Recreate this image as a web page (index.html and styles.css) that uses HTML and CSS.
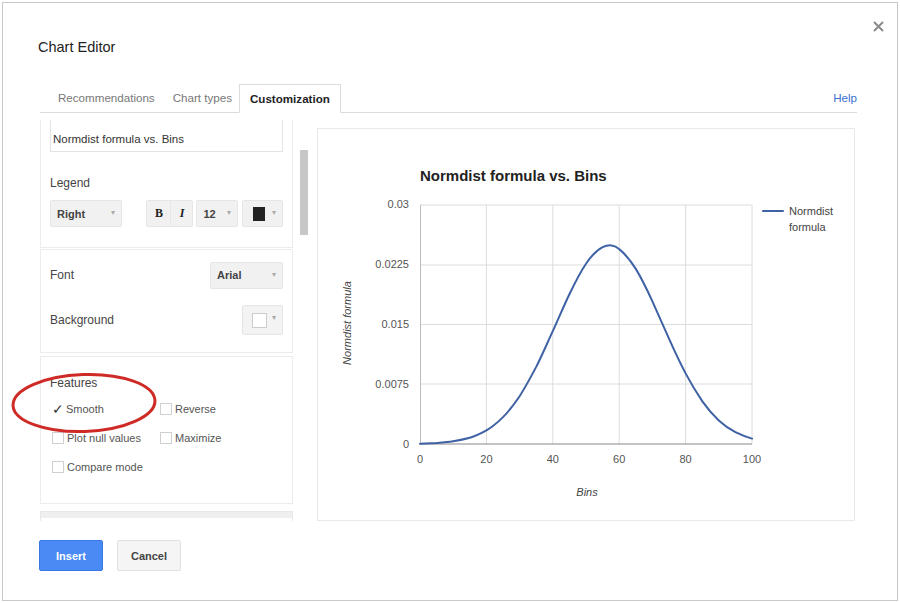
FILE: index.html
```html
<!DOCTYPE html>
<html>
<head>
<meta charset="utf-8">
<link rel="stylesheet" href="styles.css">
</head>
<body>
<div class="dialog">
  <header class="head">
    <h1 class="title">Chart Editor</h1>
    <svg class="close" width="11" height="11" viewBox="0 0 11 11"><path d="M1 1L10 10M10 1L1 10" stroke="#8a8a8a" stroke-width="2"/></svg>
  </header>
  <nav class="tabs">
    <span class="tab">Recommendations</span>
    <span class="tab">Chart types</span>
    <span class="tab active">Customization</span>
    <a class="help">Help</a>
  </nav>
  <div class="main">
    <div class="side">
      <div class="cards">
        <section class="card c1">
          <div class="title-input">Normdist formula vs. Bins</div>
          <div class="label legend-label">Legend</div>
          <div class="controls">
            <div class="dd dd-right">Right<span class="arr">▾</span></div>
            <div class="btn-group">
              <span class="fmt b">B</span><span class="fmt i">I</span>
            </div>
            <div class="dd dd-size">12<span class="arr">▾</span></div>
            <div class="dd dd-color"><span class="sw-black"></span><span class="arr">▾</span></div>
          </div>
        </section>
        <section class="card c2">
          <div class="row">
            <span class="label">Font</span>
            <div class="dd dd-font">Arial<span class="arr">▾</span></div>
          </div>
          <div class="row row-bg">
            <span class="label">Background</span>
            <div class="dd dd-bg"><span class="sw-white"></span><span class="arr">▾</span></div>
          </div>
        </section>
        <section class="card c3">
          <div class="label">Features</div>
          <div class="checks">
            <label class="chk"><span class="box checked">✓</span>Smooth</label>
            <label class="chk"><span class="box"></span>Reverse</label>
            <label class="chk"><span class="box"></span>Plot null values</label>
            <label class="chk"><span class="box"></span>Maximize</label>
            <label class="chk"><span class="box"></span>Compare mode</label>
          </div>
        </section>
        <section class="card c4"></section>
      </div>
      <div class="scrollbar"><div class="thumb"></div></div>
    </div>
    <div class="chart">
      <svg width="536" height="391" viewBox="318 129 536 391" class="chart-svg">
        <text x="420" y="181" class="ctitle">Normdist formula vs. Bins</text>
        <g class="grid">
          <line x1="420" y1="205" x2="752" y2="205"/>
          <line x1="420" y1="265" x2="752" y2="265"/>
          <line x1="420" y1="324.5" x2="752" y2="324.5"/>
          <line x1="420" y1="384" x2="752" y2="384"/>
          <line x1="486.4" y1="205" x2="486.4" y2="444"/>
          <line x1="552.8" y1="205" x2="552.8" y2="444"/>
          <line x1="619.2" y1="205" x2="619.2" y2="444"/>
          <line x1="685.6" y1="205" x2="685.6" y2="444"/>
          <line x1="752" y1="205" x2="752" y2="444"/>
        </g>
        <line x1="420.5" y1="205" x2="420.5" y2="444" class="axis-l"/>
        <line x1="420" y1="444" x2="752" y2="444" class="axis-b"/>
        <g class="ylab">
          <text x="409" y="208">0.03</text>
          <text x="409" y="268">0.0225</text>
          <text x="409" y="328">0.015</text>
          <text x="409" y="388">0.0075</text>
          <text x="409" y="448">0</text>
        </g>
        <g class="xlab">
          <text x="420" y="463">0</text>
          <text x="486.4" y="463">20</text>
          <text x="552.8" y="463">40</text>
          <text x="619.2" y="463">60</text>
          <text x="685.6" y="463">80</text>
          <text x="752" y="463">100</text>
        </g>
        <text x="587" y="496" class="atitle">Bins</text>
        <text transform="translate(351 323) rotate(-90)" class="atitle">Normdist formula</text>
        <path class="curve" d="M420,443.7 C425.5,443.5 431,443.2 436.6,443.0 C442,442.6 447.7,442.2 453.2,441.3 C459,440.3 464,439.3 469.8,437.7 C475.5,436 481,433.3 486.4,430.3 C492,427.3 497.5,422.5 503,417.1 C508.5,411.7 514,404.4 519.6,396.2 C525.3,387.5 530.7,377.3 536.2,366.9 C542,355.3 547.3,343 552.8,331.2 C558.5,318.7 563.8,305.8 569.4,294.2 C575,282.6 580.5,271.8 586,263.7 C591.5,255.6 597,250 602.6,247.1 C606,245.5 609,245.2 611.5,245.4 C614.5,245.7 617,247 619.2,249.1 C625,253.8 630.5,260.5 635.8,268.9 C641.5,278.2 647,289.5 652.4,301.4 C658,313.8 663.5,326.2 669,338.6 C674.5,351 680,362.6 685.6,373.4 C691,383.6 696.6,392.8 702.2,401.1 C707.7,409 713,415 718.8,420.4 C724.3,425.4 729.7,429.2 735.4,432.2 C741,435 746.5,437 752,438.6"/>
        <line x1="763" y1="211" x2="783" y2="211" class="curve"/>
        <text x="789" y="215" class="leg">Normdist</text>
        <text x="789" y="231" class="leg">formula</text>
      </svg>
    </div>
  </div>
  <footer class="foot">
    <button class="b-insert">Insert</button>
    <button class="b-cancel">Cancel</button>
  </footer>
  <svg class="mark" width="150" height="64" viewBox="0 0 150 64"><ellipse cx="75" cy="32" rx="71" ry="28.5" fill="none" stroke="#cf2b26" stroke-width="3" transform="rotate(-2 75 32)"/></svg>
</div>
</body>
</html>
```

FILE: styles.css
```css
* { box-sizing: border-box; }
html, body { margin: 0; padding: 0; background: #fff; }
body { font-family: "Liberation Sans", Arial, sans-serif; color: #333; }

.dialog {
  position: relative;
  margin: 2px 0 0 2px;
  width: 896px;
  height: 599px;
  border: 1px solid #c9c9c9;
  background: #fff;
  overflow: hidden;
}

.head {
  display: flex;
  justify-content: space-between;
  align-items: flex-start;
  padding: 18px 13px 0 35px;
  height: 81px;
}
.title {
  margin: 17px 0 0;
  font-size: 14.5px;
  line-height: 18px;
  font-weight: normal;
  color: #222;
}
.close { display: block; margin-top: 0; }

.tabs {
  display: flex;
  align-items: flex-end;
  margin: 0 40px 0 37px;
  padding-left: 9px;
  height: 29px;
  border-bottom: 1px solid #dcdcdc;
}
.tab {
  font-size: 11.6px;
  line-height: 28px;
  padding: 0 9px;
  color: #777;
}
.tab.active {
  margin-left: -2px;
  padding: 0 10px;
  font-weight: bold;
  color: #222;
  border: 1px solid #dcdcdc;
  border-bottom-color: #fff;
  margin-bottom: -1px;
  background: #fff;
  line-height: 27px;
}
.help {
  margin-left: auto;
  font-size: 11.6px;
  line-height: 28px;
  color: #3a6fd0;
}

.main {
  display: flex;
  margin: 7px 0 0 37px;
}
.side {
  display: flex;
  width: 270px;
  height: 401px;
}
.cards {
  width: 253px;
  height: 401px;
  overflow: hidden;
}
.card {
  border: 1px solid #ececec;
  padding: 0 9px;
  margin-bottom: 3px;
}
.c1 { border-top: 0; padding-bottom: 20px; margin-bottom: 1px; }
.title-input {
  height: 32px;
  border: 1px solid #e3e3e3;
  border-top: 0;
  padding: 8px 2px 0;
  font-size: 11.5px;
  line-height: 22px;
  color: #333;
}
.label {
  font-size: 12px;
  line-height: 16px;
  color: #444;
}
.legend-label { margin-top: 23px; }
.controls {
  display: flex;
  margin-top: 9px;
  height: 27px;
}
.dd {
  position: relative;
  display: flex;
  align-items: center;
  height: 27px;
  background: #f1f1f1;
  border: 1px solid #e6e6e6;
  border-radius: 2px;
  padding-left: 6px;
  font-size: 11px;
  font-weight: bold;
  color: #444;
}
.arr {
  position: absolute;
  right: 6px;
  top: 7px;
  font-size: 8px;
  color: #aaa;
  font-weight: normal;
}
.dd-right { width: 73px; }
.btn-group { display: flex; margin-left: 24px; }
.fmt {
  display: flex;
  align-items: center;
  justify-content: center;
  height: 27px;
  background: #f1f1f1;
  border: 1px solid #e6e6e6;
  font-size: 12px;
  color: #222;
  font-family: "Liberation Serif", serif;
  font-weight: bold;
}
.fmt.b { width: 25px; border-radius: 2px 0 0 2px; }
.fmt.i { width: 22px; font-style: italic; border-left: 0; border-radius: 0 2px 2px 0; }
.dd-size { width: 42px; margin-left: 3px; }
.dd-color { width: 41px; margin-left: 4px; padding-left: 10px; }
.sw-black { width: 12px; height: 14px; background: #222; }

.c2 { padding-top: 11px; padding-bottom: 17px; }
.row {
  display: flex;
  justify-content: space-between;
  align-items: center;
  height: 28px;
}
.row-bg { margin-top: 16px; height: 30px; }
.dd-font { width: 73px; }
.dd-bg { width: 41px; height: 30px; padding-left: 9px; background: #f3f3f3; }
.sw-white { width: 15px; height: 15px; background: #fff; border: 1px solid #ccc; }

.c3 { padding-top: 18px; padding-bottom: 28px; margin-bottom: 7px; }
.checks {
  display: grid;
  grid-template-columns: 108px auto;
  row-gap: 13px;
  margin-top: 10px;
  padding-left: 2px;
}
.chk {
  display: flex;
  align-items: center;
  height: 16px;
  font-size: 11px;
  color: #555;
}
.box {
  display: inline-flex;
  align-items: center;
  justify-content: center;
  width: 12px;
  height: 12px;
  border: 1px solid #d0d0d0;
  margin-right: 3px;
  background: #fff;
}
.box.checked {
  border-color: transparent;
  font-size: 14px;
  color: #333;
  margin-right: 2px;
}
.c4 { height: 20px; background: linear-gradient(#efefef 0, #efefef 6px, #fff 6px); border-color: #e8e8e8; }

.scrollbar {
  width: 8px;
  margin-left: 7px;
  height: 401px;
}
.thumb {
  margin-top: 30px;
  height: 85px;
  background: #c6c6c6;
  border-radius: 1px;
}

.chart {
  margin: 8px 0 0 7px;
  width: 538px;
  height: 393px;
  border: 1px solid #e9e9e9;
}
.chart-svg { display: block; font-family: "Liberation Sans", Arial, sans-serif; }
.ctitle { font-size: 15px; font-weight: bold; fill: #222; }
.grid line { stroke: #dcdcdc; stroke-width: 1; }
.axis-l { stroke: #bbb; stroke-width: 1; }
.axis-b { stroke: #888; stroke-width: 1.2; }
.ylab text { font-size: 11px; fill: #555; text-anchor: end; }
.xlab text { font-size: 11px; fill: #555; text-anchor: middle; }
.atitle { font-size: 11px; font-style: italic; fill: #444; text-anchor: middle; }
.curve { fill: none; stroke: #3f62a4; stroke-width: 2; stroke-linejoin: round; stroke-linecap: round; }
.leg { font-size: 11px; fill: #444; }

.foot {
  display: flex;
  gap: 14px;
  padding: 19px 0 0 36px;
}
.foot button {
  height: 31px;
  width: 64px;
  border-radius: 2px;
  font-family: "Liberation Sans", Arial, sans-serif;
  font-size: 11px;
  font-weight: bold;
  padding: 0;
}
.b-insert { background: #4a8af4; border: 1px solid #3b78e7; color: #fff; }
.b-cancel { background: #f5f5f5; border: 1px solid #e0e0e0; color: #444; }

.mark {
  position: absolute;
  left: 6px;
  top: 368px;
}
```
